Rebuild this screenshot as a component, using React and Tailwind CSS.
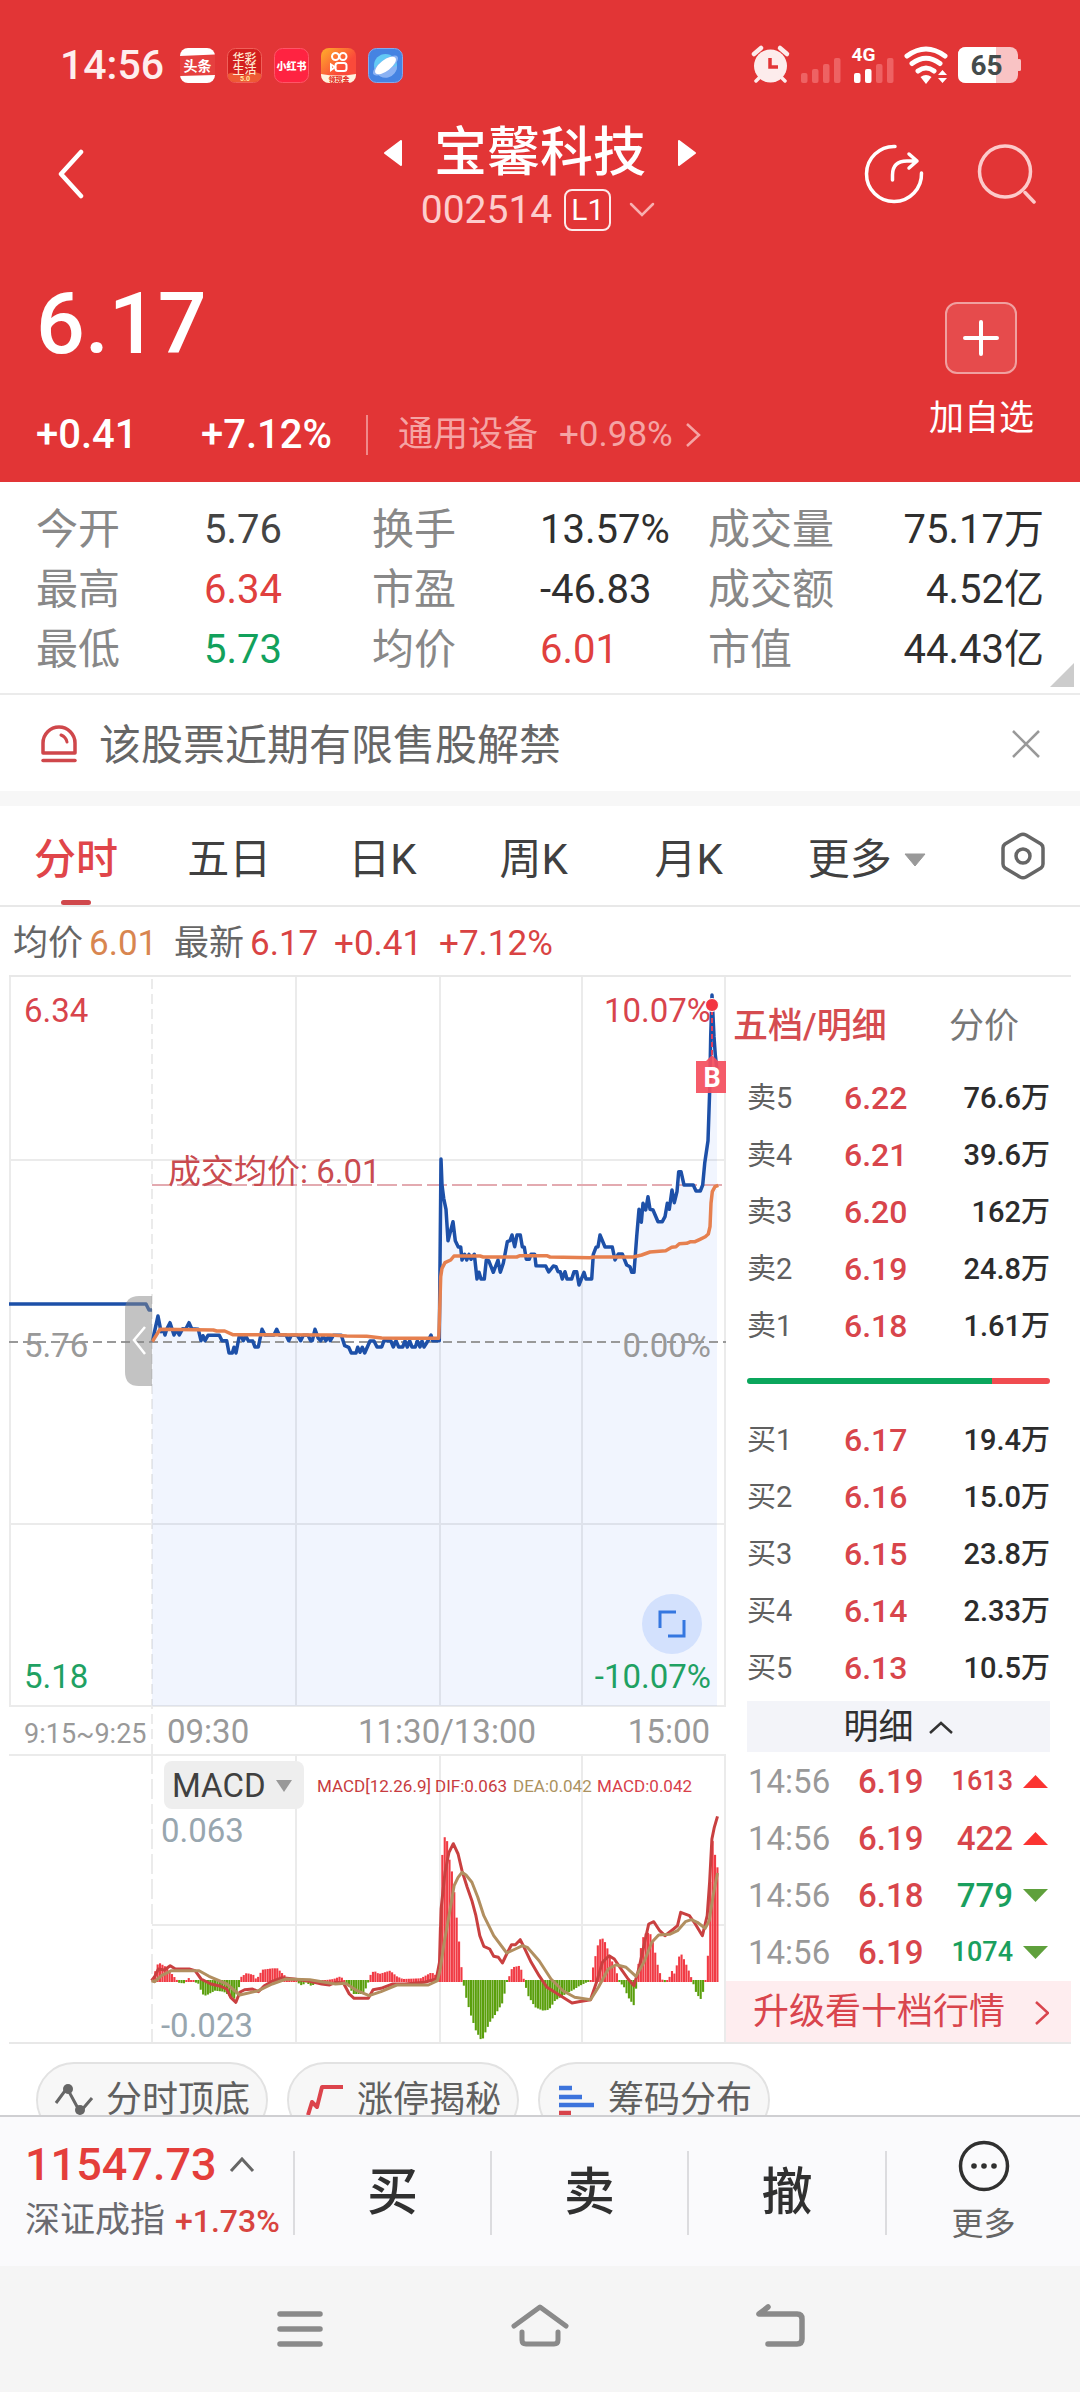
import React from "react";

const FONT = "font-[Roboto,'Noto_Sans_CJK_SC',sans-serif]";

const stats = [
  ["今开", "5.76", "text-[#444]"],
  ["换手", "13.57%", "text-[#2f2f2f]"],
  ["成交量", "75.17万", "text-[#2f2f2f]"],
  ["最高", "6.34", "text-[#e0403e]"],
  ["市盈", "-46.83", "text-[#2f2f2f]"],
  ["成交额", "4.52亿", "text-[#2f2f2f]"],
  ["最低", "5.73", "text-[#12a15c]"],
  ["均价", "6.01", "text-[#e0403e]"],
  ["市值", "44.43亿", "text-[#2f2f2f]"],
];

const sells = [
  ["卖5", "6.22", "76.6万"],
  ["卖4", "6.21", "39.6万"],
  ["卖3", "6.20", "162万"],
  ["卖2", "6.19", "24.8万"],
  ["卖1", "6.18", "1.61万"],
];
const buys = [
  ["买1", "6.17", "19.4万"],
  ["买2", "6.16", "15.0万"],
  ["买3", "6.15", "23.8万"],
  ["买4", "6.14", "2.33万"],
  ["买5", "6.13", "10.5万"],
];
const trades = [
  ["14:56", "6.19", "1613", true],
  ["14:56", "6.19", "422", true],
  ["14:56", "6.18", "779", false],
  ["14:56", "6.19", "1074", false],
];

const priceMorning = [457,1115,474,1038,483,1085,490,1080,495,1095,500,1078,510,1058,522,1095,530,1080,538,1095,548,1076,557,1078,567,1058,575,1076,595,1078,603,1112,609,1097,615,1112,624,1096,658,1096,666,1112,680,1112,687,1149,697,1149,702,1132,708,1149,718,1098,724,1098,730,1112,737,1097,745,1112,758,1113,765,1131,775,1131,786,1078,795,1095,822,1095,830,1078,838,1095,858,1095,866,1112,874,1096,892,1096,902,1112,910,1096,924,1096,932,1112,937,1112,945,1078,955,1105,962,1112,969,1098,978,1112,986,1098,991,1112,1000,1096,1024,1096,1034,1127,1046,1132,1054,1149,1068,1149,1073,1132,1080,1147,1087,1132,1094,1149,1110,1113,1122,1113,1131,1131,1145,1131,1152,1112,1172,1112,1180,1131,1188,1112,1196,1131,1208,1131,1215,1113,1222,1131,1229,1113,1236,1131,1246,1131,1252,1113,1260,1131,1266,1113,1272,1131,1284,1112,1293,1095,1298,1112,1318,1112];
const priceAfternoon = [123,567,126,645,131,685,138,718,144,812,159,755,166,812,175,831,182,831,186,870,194,853,200,870,207,853,213,868,223,853,231,927,237,907,243,927,253,927,259,870,266,872,280,907,294,870,301,907,310,880,322,815,330,812,336,795,344,830,351,795,361,795,367,830,373,832,379,868,388,868,393,853,404,853,408,887,437,888,446,906,460,888,468,890,474,905,481,905,487,927,495,905,501,927,515,927,522,905,530,905,537,945,552,907,558,927,575,927,580,853,588,832,594,830,600,795,615,831,637,831,645,870,655,852,667,852,680,885,690,890,695,907,702,907,710,800,717,718,724,757,729,700,737,720,744,680,750,718,759,720,774,755,787,755,795,740,802,700,808,718,816,660,823,698,831,665,836,605,843,605,852,645,880,645,888,663,901,663,908,645,914,580,924,512,929,360,932,200,936,75,942,200,946,255,951,300];
const avgMorning = [457,1115,480,1078,640,1080,650,1083,674,1083,698,1094,990,1095,1040,1098,1100,1099,1145,1104,1200,1105,1316,1105];
const avgAfternoon = [118,1060,122,920,126,895,135,878,152,870,162,858,240,858,250,861,350,861,360,857,440,857,450,861,570,863,580,861,700,861,725,855,750,846,797,842,815,832,828,830,838,821,860,820,872,815,885,815,900,808,916,800,925,792,930,770,933,700,937,665,945,650,955,646];

const macdBars = [80,697,97,640,118,655,138,685,150,702,165,703,172,685,180,695,200,705,207,735,217,740,240,725,262,728,290,750,300,720,305,685,320,672,338,678,345,692,360,662,385,658,398,658,412,675,430,692,445,697,460,710,470,700,485,712,495,700,510,695,540,690,558,682,575,705,590,735,612,735,625,712,632,680,642,665,655,675,683,665,700,682,715,690,760,688,788,670,800,680,806,690,812,380,817,278,825,252,831,320,838,358,843,395,848,470,855,545,862,640,867,690,872,730,885,790,900,845,915,877,924,850,935,820,950,795,968,760,978,700,985,680,992,655,1012,650,1022,695,1032,740,1050,775,1070,785,1085,782,1100,755,1120,740,1150,720,1160,712,1180,700,1190,697,1197,650,1208,590,1217,563,1228,582,1240,625,1255,665,1262,697,1275,715,1285,745,1300,770,1307,700,1313,620,1325,555,1340,550,1350,590,1360,650,1370,690,1380,702,1388,690,1395,665,1403,675,1412,628,1418,612,1428,635,1440,670,1448,697,1458,735,1470,752,1480,700,1486,645,1490,480,1497,265,1503,305,1510,355];
const dif = [80,695,88,682,97,660,112,663,127,650,140,660,175,660,190,665,205,690,230,705,255,712,270,720,280,745,293,760,303,730,315,722,335,720,350,728,365,710,385,697,410,686,440,690,480,697,510,705,530,708,545,700,565,702,580,735,592,748,628,748,640,722,660,718,690,705,720,705,770,700,800,690,808,640,812,480,822,370,832,310,843,284,855,315,865,365,878,415,890,455,900,500,910,560,920,592,935,600,945,622,957,625,967,642,978,615,990,587,1000,587,1012,572,1022,595,1040,640,1060,680,1080,715,1100,730,1120,745,1143,762,1160,758,1190,752,1205,700,1220,640,1237,620,1250,630,1270,665,1285,690,1300,710,1312,660,1325,590,1337,525,1350,518,1365,545,1378,560,1400,540,1410,530,1418,490,1440,500,1455,525,1473,560,1485,500,1491,400,1497,270,1503,235,1511,202];
const dea = [80,695,88,698,105,680,130,665,200,665,225,682,270,705,303,738,350,725,385,705,420,690,480,692,545,705,570,703,600,725,630,740,660,728,700,708,780,708,803,695,810,660,820,580,835,480,845,410,855,385,865,370,875,378,890,400,905,445,920,500,945,560,978,612,1000,600,1018,590,1030,595,1060,635,1090,690,1120,725,1150,745,1190,752,1210,715,1235,660,1255,647,1280,655,1305,682,1325,640,1345,580,1362,558,1390,556,1410,545,1430,518,1445,512,1460,520,1480,538,1490,515,1500,440,1511,372];

function points(data, offsetX, scaleX) {
  const out = [];
  for (let i = 0; i < data.length; i += 2) {
    out.push(`${(data[i] / scaleX + offsetX).toFixed(1)},${(data[i + 1] / 3 - 5).toFixed(1)}`);
  }
  return out.join(" ");
}

function valueAt(data, x) {
  for (let i = 2; i < data.length; i += 2) {
    if (x <= data[i]) {
      const t = (x - data[i - 2]) / (data[i] - data[i - 2]);
      return data[i - 1] + t * (data[i + 1] - data[i - 1]);
    }
  }
  return data[data.length - 1];
}

const pricePoints = points(priceMorning, -9, 3) + " " + points(priceAfternoon, 391, 3);
const avgPoints = points(avgMorning, -9, 3) + " " + points(avgAfternoon, 391, 3);

function AppIcons() {
  return (
    <div className="flex gap-3">
      <svg viewBox="0 0 35 35" className="size-[35px]" aria-hidden="true">
        <rect width="35" height="35" rx="8" fill="#fff" />
        <path d="M0 8L35 6.500V27L0 28Z" fill="#e5403f" />
        <text x="17.500" y="23" textAnchor="middle" fontSize="14" fontWeight="700" fill="#fff">头条</text>
      </svg>
      <svg viewBox="0 0 35 35" className="size-[35px] overflow-visible" aria-hidden="true">
        <rect x=".5" y=".5" width="34" height="34" rx="8" fill="#d3201f" stroke="#f0605a" />
        <path d="M1 26C8 22 12 30 18 27S28 23 34 26V29Q33 34 27 34H8Q2 34 1 29Z" fill="#ee5a35" />
        <text x="17.500" y="15" textAnchor="middle" fontSize="12" fontWeight="500" fill="#ffe9d0">华彩</text>
        <text x="17.500" y="26" textAnchor="middle" fontSize="12" fontWeight="500" fill="#ffe9d0">生活</text>
        <text x="18" y="33" textAnchor="middle" fontSize="7" fontWeight="700" fill="#ffe9a0">5.0</text>
      </svg>
      <svg viewBox="0 0 35 35" className="size-[35px]" aria-hidden="true">
        <rect x=".5" y=".5" width="34" height="34" rx="8" fill="#ff2341" stroke="#ff5568" />
        <text x="17.500" y="22" textAnchor="middle" fontSize="10" fontWeight="900" fill="#fff">小红书</text>
      </svg>
      <svg viewBox="0 0 35 35" className="size-[35px] overflow-visible" aria-hidden="true">
        <defs>
          <linearGradient id="warm" x1="0" y1="0" x2="1" y2="1">
            <stop offset="0" stopColor="#ffb02a" />
            <stop offset=".6" stopColor="#fb4a3a" />
          </linearGradient>
          <clipPath id="tile"><rect width="35" height="35" rx="8" /></clipPath>
        </defs>
        <g clipPath="url(#tile)">
          <rect width="35" height="35" fill="url(#warm)" />
          <g fill="none" stroke="#fff" strokeWidth="2">
            <circle cx="14.500" cy="8.500" r="3.500" />
            <circle cx="22" cy="8.500" r="3.500" />
            <rect x="14.500" y="15" width="11" height="8" rx="2.500" />
            <path d="M14 19L10 16.500V22Z" />
          </g>
          <path d="M0 26Q17 29 35 26V35H0Z" fill="#fff3df" />
        </g>
        <text x="18" y="34" textAnchor="middle" fontSize="7" fontWeight="900" fill="#e3342a">领现金</text>
      </svg>
      <svg viewBox="0 0 35 35" className="size-[35px]" aria-hidden="true">
        <rect x=".5" y=".5" width="34" height="34" rx="8" fill="#4583e2" stroke="#86a8ea" />
        <circle cx="17.500" cy="17.500" r="11.500" fill="#63c9f5" />
        <path d="M7 23A11.500 11.500 0 0 0 29 18Z" fill="#8bb2f3" />
        <ellipse cx="17.500" cy="17.500" rx="15" ry="5.500" fill="#8bb2f3" transform="rotate(-36 17.500 17.500)" />
        <ellipse cx="17.500" cy="17.500" rx="12.500" ry="5.500" fill="#fff" transform="rotate(-38 17.500 17.500)" />
      </svg>
    </div>
  );
}

function SystemIcons() {
  return (
    <svg viewBox="0 0 270 38" className="h-[38px] w-[270px] overflow-visible" role="img" aria-label="闹钟 4G 无线网络 电量65">
      <g fill="#fdecec">
        <circle cx="18.500" cy="20" r="16.500" />
        <path d="M2 8L9 2" stroke="#fdecec" strokeWidth="4.500" strokeLinecap="round" />
        <path d="M35 8L28 2" stroke="#fdecec" strokeWidth="4.500" strokeLinecap="round" />
        <path d="M4 35L9 30M33 35L28 30" stroke="#fdecec" strokeWidth="3.500" strokeLinecap="round" />
      </g>
      <path d="M18 12V21H26" fill="none" stroke="#e23536" strokeWidth="3.500" />
      <g fill="#ee6263">
        <rect x="49" y="27" width="6.500" height="10" rx="2" />
        <rect x="60" y="23" width="6.500" height="14" rx="2" />
        <rect x="71" y="18" width="6.500" height="19" rx="2" />
        <rect x="82" y="12" width="6.500" height="25" rx="2" />
        <rect x="124" y="18" width="6.500" height="19" rx="2" />
        <rect x="135" y="12" width="6.500" height="25" rx="2" />
      </g>
      <rect x="102" y="27" width="6.500" height="10" rx="2" fill="#fff" />
      <rect x="113" y="23" width="6.500" height="14" rx="2" fill="#fff" />
      <text x="99.500" y="15" fontSize="19" fontWeight="700" fill="#fff">4G</text>
      <g fill="none" stroke="#fff" strokeWidth="5" strokeLinecap="round">
        <path d="M155 10Q174 -4 193 10" />
        <path d="M160 17.500Q174 7 188 17.500" />
        <path d="M166 25Q174 19 182 25" />
      </g>
      <path d="M168.500 31Q174 27 179.500 31L174 38Z" fill="#fff" />
      <path d="M186 29L190.500 24L195 29ZM186 32H195L190.500 37Z" fill="#fff" />
      <rect x="206" y="1" width="60" height="36" rx="8" fill="#f9c3c4" />
      <path d="M214 1H244V37H214Q206 37 206 29V9Q206 1 214 1Z" fill="#fff" />
      <rect x="265" y="13" width="4" height="12" rx="1.500" fill="#f9c3c4" />
      <text x="234.500" y="29" textAnchor="middle" fontSize="28" fontWeight="700" fill="#444b4b">65</text>
    </svg>
  );
}

function Header() {
  return (
    <header className="bg-[#e23536] pt-[42px] pb-6 text-white">
      <div className="flex h-[46px] items-center justify-between pr-[58px] pl-[60px]">
        <div className="flex items-center gap-4">
          <span className="text-[41px] leading-[46px] font-medium text-[#feeeee]">14:56</span>
          <AppIcons />
        </div>
        <SystemIcons />
      </div>

      <div className="mt-[37px] grid grid-cols-[1fr_auto_1fr] px-[43px]">
        <button aria-label="返回" className="self-start justify-self-start pt-6 pl-[15px]">
          <svg viewBox="0 0 26 50" className="h-[50px] w-[26px]"><path d="M23 3L3 25L23 47" fill="none" stroke="#fff" strokeWidth="4.500" strokeLinecap="round" strokeLinejoin="round" /></svg>
        </button>
        <div className="flex flex-col items-center">
          <div className="flex items-center gap-8">
            <button aria-label="上一只"><svg viewBox="0 0 18 26" className="block h-[26px] w-[18px]"><path d="M17 1V25L1 13Z" fill="#fff" stroke="#fff" strokeLinejoin="round" strokeWidth="2" /></svg></button>
            <h1 className="text-[53px] leading-14 font-medium">宝馨科技</h1>
            <button aria-label="下一只"><svg viewBox="0 0 18 26" className="block h-[26px] w-[18px]"><path d="M1 1V25L17 13Z" fill="#fff" stroke="#fff" strokeLinejoin="round" strokeWidth="2" /></svg></button>
          </div>
          <button className="mt-1.5 flex items-center pr-1">
            <span className="text-[39px] leading-[46px] text-[#fdcdcd]">002514</span>
            <span className="ml-3 rounded-lg border-2 border-[#fdeaea] px-[5px] text-[30px] leading-[38px]">L1</span>
            <svg viewBox="0 0 26 16" className="ml-[18px] h-4 w-[26px]"><path d="M2 2L13 13L24 2" fill="none" stroke="#f8b0b0" strokeWidth="2.500" strokeLinecap="round" /></svg>
          </button>
        </div>
        <div className="flex items-start gap-[53px] justify-self-end pt-[19px]">
          <button aria-label="分享">
            <svg viewBox="0 0 60 60" className="size-[60px]" fill="none" stroke="#fff" strokeWidth="3.500" strokeLinecap="round" strokeLinejoin="round">
              <path d="M31 2.500A27.500 27.500 0 1 0 57.500 29" />
              <path d="M28.500 36V31Q28.500 17 43 17H53M45 10L53 17L45 24" />
            </svg>
          </button>
          <button aria-label="搜索">
            <svg viewBox="0 0 60 60" className="size-[60px]" fill="none" stroke="#fccaca" strokeWidth="3.500" strokeLinecap="round">
              <circle cx="28" cy="27.500" r="25.500" />
              <path d="M48 48.500L57 58" />
            </svg>
          </button>
        </div>
      </div>

      <div className="mt-[46px] flex justify-between pr-[46px] pl-9">
        <div>
          <div className="text-[86px] leading-[90px] font-medium">6.17</div>
          <div className="mt-[43px] flex items-center leading-[46px]">
            <span className="w-[165px] text-[40px] font-medium">+0.41</span>
            <span className="w-[165px] text-[40px] font-medium">+7.12%</span>
            <span className="h-10 w-[2px] bg-[#f08a8a]" />
            <a href="#sector" className="ml-[30px] flex items-center text-[35px] text-[#f5a4a4]">
              <span>通用设备</span>
              <span className="ml-[21px]">+0.98%</span>
              <svg viewBox="0 0 16 26" className="ml-3 h-[26px] w-4"><path d="M2 2L14 13L2 24" fill="none" stroke="#f5a4a4" strokeWidth="2.500" /></svg>
            </a>
          </div>
        </div>
        <button className="flex flex-col items-center self-start pt-[23px]">
          <span className="flex size-[72px] items-center justify-center rounded-xl border-2 border-[#f0a0a0] bg-[#e64b4c]">
            <svg viewBox="0 0 36 36" className="size-9"><path d="M18 2V34M2 18H34" stroke="#fff" strokeWidth="4" strokeLinecap="round" /></svg>
          </span>
          <span className="mt-6 text-[35px] leading-[42px]">加自选</span>
        </button>
      </div>
    </header>
  );
}

function Stats() {
  return (
    <section className="relative border-b-2 border-[#ebebeb] px-9 pt-[18px] pb-[13px]">
      <dl className="grid grid-cols-3 leading-[60px] whitespace-nowrap">
        {stats.map(([label, value, tone], i) => (
          <div key={label} className={i % 3 === 2 ? "flex justify-between" : "grid grid-cols-2"}>
            <dt className="text-[42px] text-[#888]">{label}</dt>
            <dd className={"text-[40px] " + tone}>{value}</dd>
          </div>
        ))}
      </dl>
      <svg viewBox="0 0 24 24" className="absolute right-1.5 bottom-1.5 size-6" aria-hidden="true"><path d="M24 0V24H0Z" fill="#ccc" /></svg>
    </section>
  );
}

function Notice() {
  return (
    <section className="flex items-center px-10 pt-[23px] pb-[17px]">
      <svg viewBox="0 0 38 40" className="mb-1 h-10 w-[38px]" fill="none" stroke="#cf474b" strokeWidth="3.500" strokeLinecap="round" aria-hidden="true">
        <path d="M3 29V19A16 16 0 0 1 35 19V29Z" strokeLinejoin="round" />
        <path d="M3 36.500H35" />
        <path d="M21 11Q26 13 27 18" strokeWidth="3" />
      </svg>
      <p className="ml-[21px] flex-1 text-[42px] leading-14 text-[#666]">该股票近期有限售股解禁</p>
      <button aria-label="关闭" className="pb-1">
        <svg viewBox="0 0 28 28" className="size-7"><path d="M1 1L27 27M27 1L1 27" stroke="#999" strokeWidth="2.500" /></svg>
      </button>
    </section>
  );
}

function Tabs() {
  return (
    <nav className="grid grid-cols-[153fr_161fr_151fr_155fr_153fr_193fr_44fr] items-start border-b-2 border-[#e8e8e8] pt-6 pr-[35px] pl-[34px] text-[42px] leading-[60px] text-[#404040]">
      <button className="flex flex-col items-center justify-self-start font-medium text-[#e0454a]">
        分时
        <span className="mt-2.5 h-[5px] w-[30px] rounded-full bg-[#d0484c]" />
      </button>
      <button className="justify-self-start">五日</button>
      <button className="justify-self-start">日K</button>
      <button className="justify-self-start">周K</button>
      <button className="justify-self-start">月K</button>
      <button className="flex items-center gap-3 justify-self-start">
        更多
        <svg viewBox="0 0 22 14" className="h-3.5 w-[22px]"><path d="M1 1H21L11 13Z" fill="#999" stroke="#999" strokeLinejoin="round" /></svg>
      </button>
      <button aria-label="设置" className="justify-self-end pt-0.5">
        <svg viewBox="0 0 44 48" className="h-12 w-[44px]" fill="none" stroke="#666" strokeWidth="3.500" strokeLinejoin="round">
          <path d="M19 3Q22 1.500 25 3L40 12Q42 13.500 42 16V32Q42 34.500 40 36L25 45Q22 46.500 19 45L4 36Q2 34.500 2 32V16Q2 13.500 4 12Z" />
          <circle cx="22" cy="24" r="7" />
        </svg>
      </button>
    </nav>
  );
}

function InfoRow() {
  return (
    <div className="flex items-baseline px-[13px] pt-[5px] text-[35px] leading-[63px] text-[#d94343]">
      <span className="text-[#666]">均价</span>
      <span className="ml-1.5 w-[85px] text-[#d88650]">6.01</span>
      <span className="text-[#666]">最新</span>
      <span className="ml-1.5 w-[84px]">6.17</span>
      <span className="w-[105px]">+0.41</span>
      <span>+7.12%</span>
    </div>
  );
}

function PriceChart() {
  return (
    <div className="relative">
      <svg viewBox="0 2 717 777" className="block h-auto w-full" role="img" aria-label="分时走势图">
        <g stroke="#ebebeb" strokeWidth="2" fill="none">
          <path d="M1 2V731M716 2V731M287 2V731M431 2V731M573 2V731M0 185H717M0 549H717M0 731H717" />
          <path d="M143 4V780" strokeDasharray="10 5" />
        </g>
        <polygon points={`${pricePoints} 708,100 708,731 143,731`} fill="#4a7cf5" fillOpacity=".08" />
        <path d="M0 367H717" stroke="#999" strokeWidth="2" strokeDasharray="9 5" />
        <path d="M143 210H717" stroke="#e3aab0" strokeWidth="2" strokeDasharray="20 5" />
        <g fontSize="33">
          <text x="15" y="47" fill="#d8444c">6.34</text>
          <text x="702" y="47" textAnchor="end" fill="#d8444c">10.07%</text>
          <text x="15" y="382" fill="#999">5.76</text>
          <text x="702" y="382" textAnchor="end" fill="#999">0.00%</text>
          <text x="15" y="713" fill="#1fa163">5.18</text>
          <text x="702" y="713" textAnchor="end" fill="#1fa163">-10.07%</text>
          <text x="159" y="208" fill="#c94b50">成交均价: 6.01</text>
          <g fill="#999">
            <text x="158" y="768">09:30</text>
            <text x="438" y="768" textAnchor="middle">11:30/13:00</text>
            <text x="701" y="768" textAnchor="end">15:00</text>
          </g>
          <text x="15" y="768" fontSize="27" fill="#999">9:15~9:25</text>
        </g>
        <g fill="none" strokeWidth="3.500" strokeLinejoin="round">
          <path d="M0 329H137L140 335H143" stroke="#1d50a8" />
          <polyline points={pricePoints} stroke="#1d50a8" />
          <polyline points={avgPoints} stroke="#e6804f" />
        </g>
        <path d="M703 35V80" stroke="#e0405c" strokeWidth="2" strokeDasharray="5 3" />
        <circle cx="703" cy="30" r="6.500" fill="#f33440" stroke="#fff" />
        <path d="M687 86H697L703 80L709 86H717V118H687Z" fill="#f4505f" fillOpacity=".93" />
        <text x="703" y="112" textAnchor="middle" fontSize="27" fontWeight="700" fill="#fff">B</text>
        <path d="M143 321H130Q116 321 116 335V397Q116 411 130 411H143Z" fill="#888" fillOpacity=".5" />
        <path d="M136 352L125 365L136 379" fill="none" stroke="#fff" strokeWidth="2.500" />
      </svg>
      <button aria-label="全屏" className="absolute right-[24px] bottom-[100px] flex size-[60px] items-center justify-center rounded-full bg-[#d3e1fd]">
        <svg viewBox="0 0 28 28" className="size-7"><path d="M2 18V2H18M26 10V26H10" fill="none" stroke="#3577e0" strokeWidth="3" /></svg>
      </button>
    </div>
  );
}

function MacdChart() {
  const bars = [];
  for (let i = 0; i < 237; i++) {
    const x = 83 + i * 6.05;
    const v = valueAt(macdBars, x);
    const up = v < 698;
    const y = v / 3 - 5;
    bars.push(
      <rect key={i} x={x / 2.529 + 110} width="2.1" y={up ? Math.min(y, 226) : 226} height={up ? Math.max(228 - y, 2) : Math.max(y - 226, 2)} fill={up ? "#f13a44" : "#5a9f0c"} />
    );
  }
  return (
    <div className="relative">
      <svg viewBox="0 0 717 288" className="block h-auto w-full overflow-visible" role="img" aria-label="MACD指标图">
        <g stroke="#ebebeb" strokeWidth="2" fill="none">
          <path d="M0 1H717M143 171H717M287 1V288M431 1V288M573 1V288M716 1V288" />
          <path d="M143 0V288" strokeDasharray="20 5" />
        </g>
        {bars}
        <g fill="none" strokeWidth="3" strokeLinejoin="round">
          <polyline points={points(dif, 111, 2.529)} stroke="#c94040" />
          <polyline points={points(dea, 111, 2.529)} stroke="#b18f60" />
        </g>
        <g fontSize="33" fill="#98a6af">
          <text x="152" y="88">0.063</text>
          <text x="152" y="283">-0.023</text>
        </g>
        <g fontSize="17">
          <text x="308" y="38" fill="#c83c40">MACD[12.26.9]</text>
          <text x="426" y="38" fill="#c83c40">DIF:0.063</text>
          <text x="504" y="38" fill="#ac9260">DEA:0.042</text>
          <text x="588" y="38" fill="#d8404a">MACD:0.042</text>
        </g>
      </svg>
      <button className="absolute top-[7px] left-[155px] flex h-12 items-center gap-2.5 rounded-lg bg-[#eee] pt-0.5 pr-3 pl-2 text-[33px] leading-11 text-[#404040]">
        MACD
        <svg viewBox="0 0 16 12" className="h-3 w-4"><path d="M0 0H16L8 12Z" fill="#999" /></svg>
      </button>
    </div>
  );
}

function BookTable({ rows, label }) {
  return (
    <table className="w-full table-fixed" aria-label={label}>
      <tbody>
        {rows.map(([name, price, vol]) => (
          <tr key={name} className="h-[57px] leading-[57px]">
            <th scope="row" className="w-[97px] p-0 text-left text-[29px] font-normal text-[#606060]">{name}</th>
            <td className="p-0 text-[32px] font-medium text-[#d8454b]">{price}</td>
            <td className="p-0 text-right text-[29px] font-medium text-[#2c2c2c]">{vol}</td>
          </tr>
        ))}
      </tbody>
    </table>
  );
}

function OrderBook() {
  return (
    <div className="flex flex-col">
      <div className="flex justify-between pt-[25px] pr-[52px] pl-[7px] text-[35px] leading-[50px]">
        <button className="font-medium text-[#d54c50]">五档/明细</button>
        <button className="text-[#777]">分价</button>
      </div>
      <div className="mx-[21px] mt-[18px]">
        <BookTable rows={sells} label="卖盘" />
        <div className="mt-[23px] mb-7 flex h-[6px] overflow-hidden rounded-full">
          <span className="flex-[81] bg-[#0aa65c]" />
          <span className="flex-[19] bg-[#f04c50]" />
        </div>
        <BookTable rows={buys} label="买盘" />
        <button className="mt-1 flex w-full items-center justify-center gap-3.5 bg-[#f3f4f9] pt-0.5 text-[35px] leading-[49px] text-[#2f2f2f]">
          明细
          <svg viewBox="0 0 26 14" className="h-3.5 w-[26px]"><path d="M2 12L13 2L24 12" fill="none" stroke="#333" strokeWidth="2.500" /></svg>
        </button>
        <table className="mt-px w-full table-fixed" aria-label="成交明细">
          <tbody>
            {trades.map(([time, price, qty, up], i) => (
              <tr key={i} className="h-[57px] leading-[57px]">
                <td className="w-[111px] p-0 pl-px text-[33px] text-[#999]">{time}</td>
                <td className="w-[75px] p-0 text-[33px] font-medium text-[#d8454b]">{price}</td>
                <td className={(qty.length > 3 ? "text-[27px] " : "text-[33px] ") + (up ? "text-[#d8454b]" : "text-[#1a9f5e]") + " p-0 pr-2.5 text-right font-medium"}>{qty}</td>
                <td className="w-[27px] p-0">
                  <svg viewBox="0 0 25 13" className="h-[13px] w-[25px]" aria-hidden="true">
                    {up ? <path d="M0 13L12.500 0L25 13Z" fill="#fb3431" /> : <path d="M0 0H25L12.500 13Z" fill="#5fa03c" />}
                  </svg>
                </td>
              </tr>
            ))}
          </tbody>
        </table>
      </div>
      <a href="#upgrade" className="flex items-center justify-between bg-[#feedef] pt-0.5 pr-[22px] pl-[27px] text-[36px] leading-[59px] text-[#d9454d]">
        升级看十档行情
        <svg viewBox="0 0 14 24" className="h-6 w-3.5"><path d="M1 1L13 12L1 23" fill="none" stroke="#d9454d" strokeWidth="2.500" /></svg>
      </a>
    </div>
  );
}

function Pill({ label, children }) {
  return (
    <button className="flex h-[76px] shrink-0 items-center rounded-full border-2 border-[#e2e2e2] bg-[#f7f7f7] pr-4 pl-4 text-[36px] leading-[72px] text-[#606060]">
      <svg viewBox="0 0 40 40" className="mr-3 size-10" aria-hidden="true">{children}</svg>
      {label}
    </button>
  );
}

function Tools() {
  return (
    <div className="mt-[18px] flex h-[53px] gap-[19px] overflow-hidden px-9">
      <Pill label="分时顶底">
        <path d="M2 23L13 8L26 32L38 18" fill="none" stroke="#666" strokeWidth="3" />
        <circle cx="14" cy="9" r="5" fill="#666" />
        <circle cx="26" cy="30" r="5" fill="#666" />
      </Pill>
      <Pill label="涨停揭秘">
        <path d="M3 35L7 22L12 27L17 7H38" fill="none" stroke="#dc444c" strokeWidth="4" strokeLinejoin="round" />
      </Pill>
      <Pill label="筹码分布">
        <path d="M3 8H16M3 17H26M3 25H38" stroke="#3d74dc" strokeWidth="4.500" />
        <path d="M3 33H15" stroke="#d8434b" strokeWidth="4.500" />
      </Pill>
    </div>
  );
}

function TradeBar() {
  return (
    <div className="grid grid-cols-[293fr_197fr_197fr_198fr_195fr] items-center border-t-2 border-[#cfcfd2] bg-[#fafafc] pt-[23px] pb-5">
      <button className="pl-[25px] text-left whitespace-nowrap">
        <span className="flex items-center gap-3 text-[45px] leading-[50px] font-medium text-[#e43e3b]">
          11547.73
          <svg viewBox="0 0 26 16" className="h-4 w-[26px]"><path d="M2 14L13 2L24 14" fill="none" stroke="#666" strokeWidth="3" /></svg>
        </span>
        <span className="mt-1.5 flex items-baseline text-[35px] leading-[50px] text-[#6a6a70]">
          深证成指<span className="ml-2.5 text-[32px] font-medium text-[#d8443f]">+1.73%</span>
        </span>
      </button>
      {["买", "卖", "撤"].map((t) => (
        <button key={t} className="border-l-2 border-[#dcdcdf] text-[51px] leading-[84px] font-medium text-[#303030]">{t}</button>
      ))}
      <button className="flex items-center">
        <span className="h-[84px] w-[2px] bg-[#dcdcdf]" />
        <span className="flex flex-1 flex-col items-center">
          <svg viewBox="0 0 52 52" className="size-[52px]">
            <circle cx="26" cy="26" r="23.500" fill="none" stroke="#303030" strokeWidth="3.500" />
            <g fill="#303030"><circle cx="16" cy="26" r="2.800" /><circle cx="26" cy="26" r="2.800" /><circle cx="36" cy="26" r="2.800" /></g>
          </svg>
          <span className="mt-2.5 text-[32px] leading-11 text-[#666]">更多</span>
        </span>
      </button>
    </div>
  );
}

function SystemNav() {
  return (
    <nav className="flex items-center justify-center gap-[180px] bg-[#f5f5f5] pt-[30px] pb-9">
      <button aria-label="最近任务"><svg viewBox="0 0 60 60" className="size-[60px]"><path d="M10 18H50M10 33H50M10 48H50" stroke="#8a8a8a" strokeWidth="5.500" strokeLinecap="round" /></svg></button>
      <button aria-label="主页"><svg viewBox="0 0 60 60" className="size-[60px]" fill="none" stroke="#8a8a8a" strokeWidth="5" strokeLinecap="round" strokeLinejoin="round"><path d="M4 30L30 11L56 30" /><path d="M12 36V44Q12 48 16 48H44Q48 48 48 44V36" /></svg></button>
      <button aria-label="返回桌面"><svg viewBox="0 0 60 60" className="size-[60px]" fill="none" stroke="#8a8a8a" strokeWidth="5.500" strokeLinecap="round" strokeLinejoin="round"><path d="M18 11L9 18H47Q52 18 52 23V43Q52 48 47 48H18" /></svg></button>
    </nav>
  );
}

export default function App() {
  return (
    <div className={"w-full bg-white " + FONT}>
      <Header />
      <Stats />
      <Notice />
      <div className="h-[15px] bg-[#f7f7f7]" />
      <Tabs />
      <InfoRow />
      <main className="mx-[9px] grid grid-cols-[717fr_345fr] items-start border-y-2 border-[#e8e8e8]">
        <div>
          <PriceChart />
          <MacdChart />
        </div>
        <OrderBook />
      </main>
      <Tools />
      <TradeBar />
      <SystemNav />
    </div>
  );
}
